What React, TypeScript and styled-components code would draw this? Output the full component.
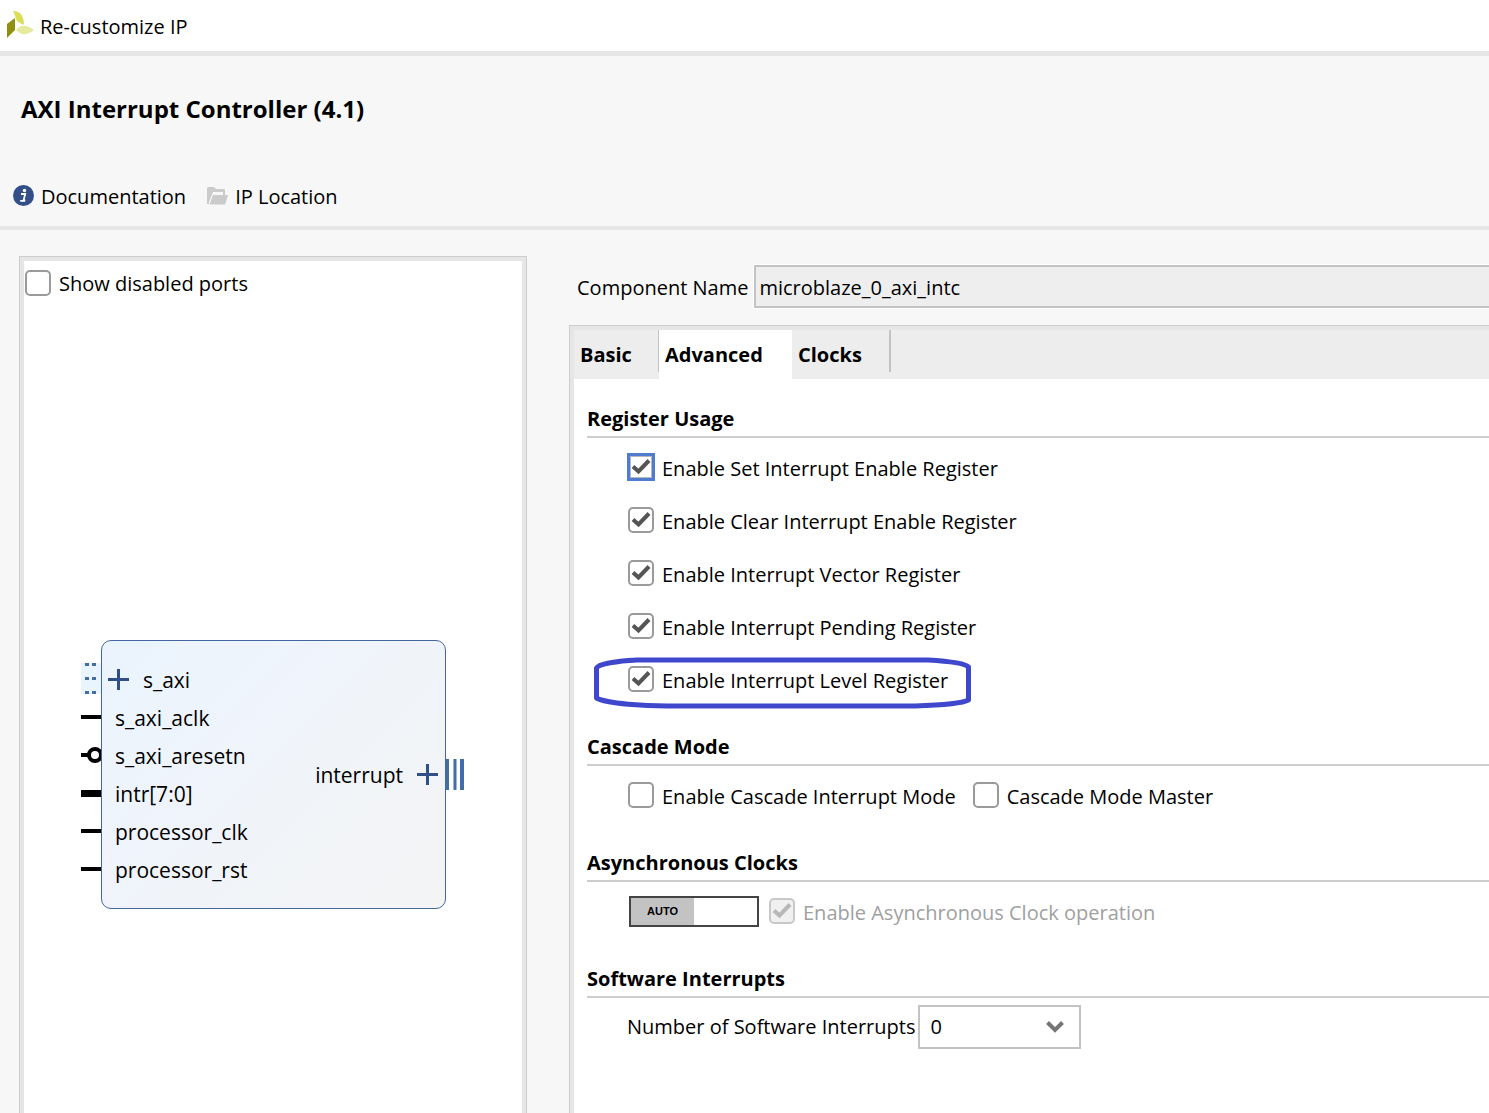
import React, { useState } from "react";
import styled, { createGlobalStyle } from "styled-components";

const GlobalStyle = createGlobalStyle`
  *, *::before, *::after { box-sizing: border-box; }
  body {
    margin: 0;
    background: #f7f7f7;
    color: #000;
    font-family: "Open Sans", "Noto Sans", sans-serif;
    font-size: 20px;
    line-height: 28px;
    overflow: hidden;
  }
  button, input, select { font: inherit; color: inherit; }
`;

const Window = styled.div`
  display: flex;
  flex-direction: column;
  height: 100vh;
  white-space: nowrap;
`;

const TitleBar = styled.header`
  display: flex;
  align-items: center;
  gap: 5px;
  height: 56px;
  padding: 2px 6px 0;
  background: #fff;
  border-bottom: 5px solid #e6e6e6;

  svg { margin-bottom: 4px; }
`;

const IpHeader = styled.section`
  display: flex;
  flex-direction: column;
  gap: 58px;
  padding: 37px 13px 15px;
  border-bottom: 4px solid #e6e6e6;
`;

const IpTitle = styled.h1`
  margin: 0;
  padding-left: 8px;
  font-size: 24px;
  line-height: 32px;
  font-weight: 700;
`;

const Links = styled.nav`
  display: flex;
  gap: 21px;
`;

const IconLink = styled.a`
  display: flex;
  align-items: center;
  gap: 7px;
  color: inherit;
  text-decoration: none;

  svg { margin-bottom: 3px; }
`;

const Body = styled.main`
  display: flex;
  flex: 1;
  gap: 42px;
  min-height: 0;
  padding-left: 19px;
`;

const PreviewPanel = styled.section`
  flex: 0 0 508px;
  margin-top: 26px;
  border: 1px solid #cdcdcd;
  border-bottom: 0;
`;

const PreviewInner = styled.div`
  display: flex;
  flex-direction: column;
  gap: 342px;
  height: 100%;
  padding: 6px 0;
  background: #fff;
  border: 4px solid #e6e6e6;
  border-bottom: 0;
`;

const Settings = styled.section`
  display: flex;
  flex: 1;
  flex-direction: column;
  gap: 17px;
  min-width: 0;
  padding-top: 35px;
`;

const NameRow = styled.div`
  display: flex;
  align-items: center;
  gap: 6px;
  padding-left: 8px;

  label { padding-top: 2px; }
`;

const NameInput = styled.input`
  flex: 1;
  min-width: 0;
  height: 43px;
  padding: 2px 3px 0;
  background: #eee;
  border: 2px solid #c3c3c3;
  border-right: 0;
  border-radius: 0;
  outline: 1px solid #fff;
`;

const TabFrame = styled.div`
  flex: 1;
  border: solid #cdcdcd;
  border-width: 1px 0 0 1px;
`;

const TabInner = styled.div`
  height: 100%;
  background: #fff;
  border: solid #e6e6e6;
  border-width: 4px 0 0 4px;
`;

const TabStrip = styled.div`
  display: flex;
  height: 49px;
  background: #ededed;
`;

const Tab = styled.button<{ $active: boolean; $width: number }>`
  width: ${(p) => p.$width}px;
  padding: 0 6px;
  border: 0;
  background: ${(p) => (p.$active ? "#fff" : "transparent")};
  font-weight: 700;
  text-align: left;
`;

const TabDivider = styled.span<{ $width: number }>`
  width: ${(p) => p.$width}px;
  height: 42px;
  background: #c3c3c3;
`;

const TabBody = styled.div`
  display: flex;
  flex-direction: column;
  gap: 26px;
  padding: 25px 0 0 13px;
`;

const SectionTitle = styled.h2`
  margin: 0 0 3px;
  padding-bottom: 2px;
  border-bottom: 2px solid #cdcdcd;
  font-size: 20px;
  line-height: 30px;
  font-weight: 700;
`;

const Row = styled.div`
  position: relative;
  display: flex;
  align-items: center;
  gap: 16px;
  height: 53px;
  padding: 0 0 1px 40px;
`;

const CheckLabel = styled.label<{ $disabled?: boolean }>`
  display: flex;
  align-items: center;
  gap: 7px;
  color: ${(p) => (p.$disabled ? "#a0a0a0" : "inherit")};
`;

const LabelText = styled.span`
  padding-top: 3px;
`;

const BoxCell = styled.span`
  display: grid;
  place-items: center;
  width: 28px;
  height: 28px;

  > * { grid-area: 1 / 1; }
  > svg { pointer-events: none; }
`;

const Box = styled.input<{ $ring?: boolean }>`
  appearance: none;
  width: 26px;
  height: 26px;
  margin: 0;
  background: #fff;
  border: 2px solid #9a9a9a;
  border-radius: 5px;

  ${(p) =>
    p.$ring &&
    `
    width: 28px;
    height: 28px;
    border: 3px solid #4f7ccf;
    border-radius: 0;
    box-shadow: inset 0 0 0 1px #b4b8c0;
  `}

  &:disabled {
    background: #f0f0f0;
    border-color: #c8c8c8;
  }
`;

const Toggle = styled.button`
  display: flex;
  width: 130px;
  height: 31px;
  margin: 1px 0 0 2px;
  padding: 0;
  background: #fff;
  border: 2px solid #444;
`;

const ToggleSide = styled.span`
  width: 50%;
  height: 100%;
  background: #c3c3c3;
  font: 700 11px/27px "Liberation Sans", sans-serif;
  text-align: center;
`;

const FieldGroup = styled.div`
  display: flex;
  align-items: center;
  gap: 3px;
`;

const SelectCell = styled.span`
  display: grid;
  align-items: center;
  width: 163px;

  > * { grid-area: 1 / 1; }
  > svg { justify-self: end; margin-right: 17px; pointer-events: none; }
`;

const Select = styled.select`
  appearance: none;
  width: 100%;
  height: 44px;
  padding: 0 10px;
  background: #fff;
  border: 2px solid #c3c3c3;
  border-radius: 0;
`;

const Highlight = styled.svg`
  position: absolute;
  top: 4px;
  left: 6px;
`;

const ToggleGroup = styled.div`
  display: flex;
  align-items: center;
  gap: 9px;
`;

const Diagram = styled.div`
  display: flex;
  justify-content: center;
`;

const PinColumn = styled.div`
  display: flex;
  flex-direction: column;
  width: 20px;
  padding-top: 20px;

  svg { display: block; overflow: visible; }
`;

const OutputColumn = styled.div`
  display: flex;
  align-items: center;
  width: 19px;
`;

const Block = styled.div`
  display: flex;
  align-items: center;
  justify-content: space-between;
  width: 345px;
  height: 269px;
  padding: 0 7px 0 6px;
  background: linear-gradient(135deg, #eaf4fd 0%, #eff4fc 35%, #f0f4f8 60%, #f4f4f5 100%);
  border: 1px solid #44679f;
  border-radius: 10px;
`;

const PortList = styled.ul`
  margin: 0;
  padding: 0;
  list-style: none;
  font-size: 21px;
`;

const Port = styled.li<{ $bus?: boolean }>`
  display: flex;
  align-items: center;
  gap: ${(p) => (p.$bus ? 14 : 0)}px;
  height: 38px;
  padding-left: ${(p) => (p.$bus ? 0 : 7)}px;
`;

const CheckMark = ({ color }: { color: string }) => (
  <svg width="20" height="20" viewBox="0 0 20 20" fill="none" stroke={color} strokeWidth="4">
    <path d="M2 9.5 7.5 14.5 18 3.5" />
  </svg>
);

const Plus = () => (
  <svg width="21" height="21" viewBox="0 0 21 21" stroke="#2f4f86" strokeWidth="3">
    <path d="M10.5 0V21M0 10.5H21" />
  </svg>
);

const Logo = () => (
  <svg width="29" height="30" viewBox="0 0 29 30">
    <path d="M1 14 9 8V20L1 28Z" fill="#8f9011" />
    <path d="M7 1C12 1 17 3 18 13L17 15 11 11C9 7 9 4 7 1Z" fill="#dade55" />
    <path d="M10 20C14 15 20 14 28 20 22 25 16 26 10 20Z" fill="#e6ea9c" />
  </svg>
);

const InfoIcon = () => (
  <svg width="21" height="21" viewBox="0 0 21 21">
    <circle cx="10.5" cy="10.5" r="10.5" fill="#324f87" />
    <circle cx="11.5" cy="5.5" r="1.7" fill="#fff" />
    <path d="M8 9h4.2l-1.6 6.4h1.7M7.2 15.8h5" fill="none" stroke="#fff" strokeWidth="1.8" />
  </svg>
);

const FolderIcon = () => (
  <svg width="21" height="18" viewBox="0 0 21 18" fill="#cbcbcb">
    <path d="M0 1 1 0H7L9 2H17L18 3V8H16V5H6L2 15V17H0Z" />
    <path d="M6 8H21L18 17.500H2.500Z" />
  </svg>
);

const pinShapes: Record<string, React.ReactNode> = {
  bus: (
    <>
      <rect y="3" width="20" height="31" fill="#e9f4fd" />
      <path
        d="M4 4.500H8M11 4.500H15M4 18.500H8M11 18.500H15M4 32.500H8M11 32.500H15"
        stroke="#3f6fa6"
        strokeWidth="3"
      />
    </>
  ),
  wire: <path d="M0 19H20" stroke="#000" strokeWidth="4" />,
  inverted: (
    <>
      <path d="M0 19H8" stroke="#000" strokeWidth="4" />
      <circle cx="14" cy="19" r="6" fill="#fff" stroke="#000" strokeWidth="4" />
    </>
  ),
  vector: <path d="M0 19.500H20" stroke="#000" strokeWidth="7" />,
};

const inputPorts = [
  { name: "s_axi", kind: "bus" },
  { name: "s_axi_aclk", kind: "wire" },
  { name: "s_axi_aresetn", kind: "inverted" },
  { name: "intr[7:0]", kind: "vector" },
  { name: "processor_clk", kind: "wire" },
  { name: "processor_rst", kind: "wire" },
];

const tabs = [
  { name: "Basic", width: 84, divider: 1 },
  { name: "Advanced", width: 133, divider: 0 },
  { name: "Clocks", width: 97, divider: 2 },
];

const registers = [
  { text: "Enable Set Interrupt Enable Register", ring: true },
  { text: "Enable Clear Interrupt Enable Register" },
  { text: "Enable Interrupt Vector Register" },
  { text: "Enable Interrupt Pending Register" },
  { text: "Enable Interrupt Level Register", highlighted: true },
];

type CheckProps = { text: string; initial?: boolean; disabled?: boolean; ring?: boolean };

const Check = ({ text, initial = false, disabled, ring }: CheckProps) => {
  const [on, setOn] = useState(initial);
  return (
    <CheckLabel $disabled={disabled}>
      <BoxCell>
        <Box
          type="checkbox"
          checked={on}
          disabled={disabled}
          $ring={ring}
          onChange={() => setOn(!on)}
        />
        {on && <CheckMark color={disabled ? "#b8b8b8" : "#555"} />}
      </BoxCell>
      <LabelText>{text}</LabelText>
    </CheckLabel>
  );
};

const BlockDiagram = () => (
  <Diagram>
    <PinColumn>
      {inputPorts.map((port) => (
        <svg key={port.name} width="20" height="38" viewBox="0 0 20 38">
          {pinShapes[port.kind]}
        </svg>
      ))}
    </PinColumn>
    <Block>
      <PortList>
        {inputPorts.map((port) => (
          <Port key={port.name} $bus={port.kind === "bus"}>
            {port.kind === "bus" && <Plus />}
            {port.name}
          </Port>
        ))}
      </PortList>
      <PortList>
        <Port $bus>
          interrupt
          <Plus />
        </Port>
      </PortList>
    </Block>
    <OutputColumn>
      <svg width="19" height="31" viewBox="0 0 19 31" stroke="#3f6fa6">
        <path d="M1.500 0V31M9 0V31" strokeWidth="3" />
        <path d="M16 0V31" strokeWidth="4" />
      </svg>
    </OutputColumn>
  </Diagram>
);

export default function App() {
  const [active, setActive] = useState("Advanced");
  return (
    <Window>
      <GlobalStyle />
      <TitleBar>
        <Logo />
        Re-customize IP
      </TitleBar>
      <IpHeader>
        <IpTitle>AXI Interrupt Controller (4.1)</IpTitle>
        <Links>
          <IconLink href="#documentation">
            <InfoIcon />
            Documentation
          </IconLink>
          <IconLink href="#location">
            <FolderIcon />
            IP Location
          </IconLink>
        </Links>
      </IpHeader>
      <Body>
        <PreviewPanel>
          <PreviewInner>
            <Check text="Show disabled ports" />
            <BlockDiagram />
          </PreviewInner>
        </PreviewPanel>
        <Settings>
          <NameRow>
            <label htmlFor="component-name">Component Name</label>
            <NameInput id="component-name" readOnly value="microblaze_0_axi_intc" />
          </NameRow>
          <TabFrame>
            <TabInner>
              <TabStrip role="tablist">
                {tabs.map((tab) => (
                  <React.Fragment key={tab.name}>
                    <Tab
                      role="tab"
                      aria-selected={tab.name === active}
                      $active={tab.name === active}
                      $width={tab.width}
                      onClick={() => setActive(tab.name)}
                    >
                      {tab.name}
                    </Tab>
                    {tab.divider > 0 && <TabDivider $width={tab.divider} />}
                  </React.Fragment>
                ))}
              </TabStrip>
              <TabBody role="tabpanel">
                <section>
                  <SectionTitle>Register Usage</SectionTitle>
                  {registers.map((register) => (
                    <Row key={register.text}>
                      <Check text={register.text} ring={register.ring} initial />
                      {register.highlighted && (
                        <Highlight
                          width="379"
                          height="52"
                          viewBox="0 0 379 52"
                          fill="none"
                          stroke="#3f48cc"
                          strokeWidth="5"
                          strokeLinejoin="round"
                          pointerEvents="none"
                        >
                          <path d="M3.500 11C6 7 24 4 44 3H335C352 4 372 6 375.500 10V43C370 46 350 48 322 49H74C54 49 14 47 3.500 41Z" />
                        </Highlight>
                      )}
                    </Row>
                  ))}
                </section>
                <section>
                  <SectionTitle>Cascade Mode</SectionTitle>
                  <Row>
                    <Check text="Enable Cascade Interrupt Mode" />
                    <Check text="Cascade Mode Master" />
                  </Row>
                </section>
                <section>
                  <SectionTitle>Asynchronous Clocks</SectionTitle>
                  <Row>
                    <ToggleGroup>
                      <Toggle type="button" aria-label="Automatic clock mode">
                        <ToggleSide>AUTO</ToggleSide>
                      </Toggle>
                      <Check text="Enable Asynchronous Clock operation" initial disabled />
                    </ToggleGroup>
                  </Row>
                </section>
                <section>
                  <SectionTitle>Software Interrupts</SectionTitle>
                  <Row>
                    <FieldGroup>
                      <label htmlFor="software-interrupts">Number of Software Interrupts</label>
                      <SelectCell>
                        <Select id="software-interrupts" defaultValue="0">
                          {[0, 1, 2, 3, 4].map((n) => (
                            <option key={n}>{n}</option>
                          ))}
                        </Select>
                        <svg width="18" height="12" viewBox="0 0 18 12" fill="none" stroke="#757575" strokeWidth="4">
                          <path d="M1.500 1.500 9 9 16.500 1.500" />
                        </svg>
                      </SelectCell>
                    </FieldGroup>
                  </Row>
                </section>
              </TabBody>
            </TabInner>
          </TabFrame>
        </Settings>
      </Body>
    </Window>
  );
}
